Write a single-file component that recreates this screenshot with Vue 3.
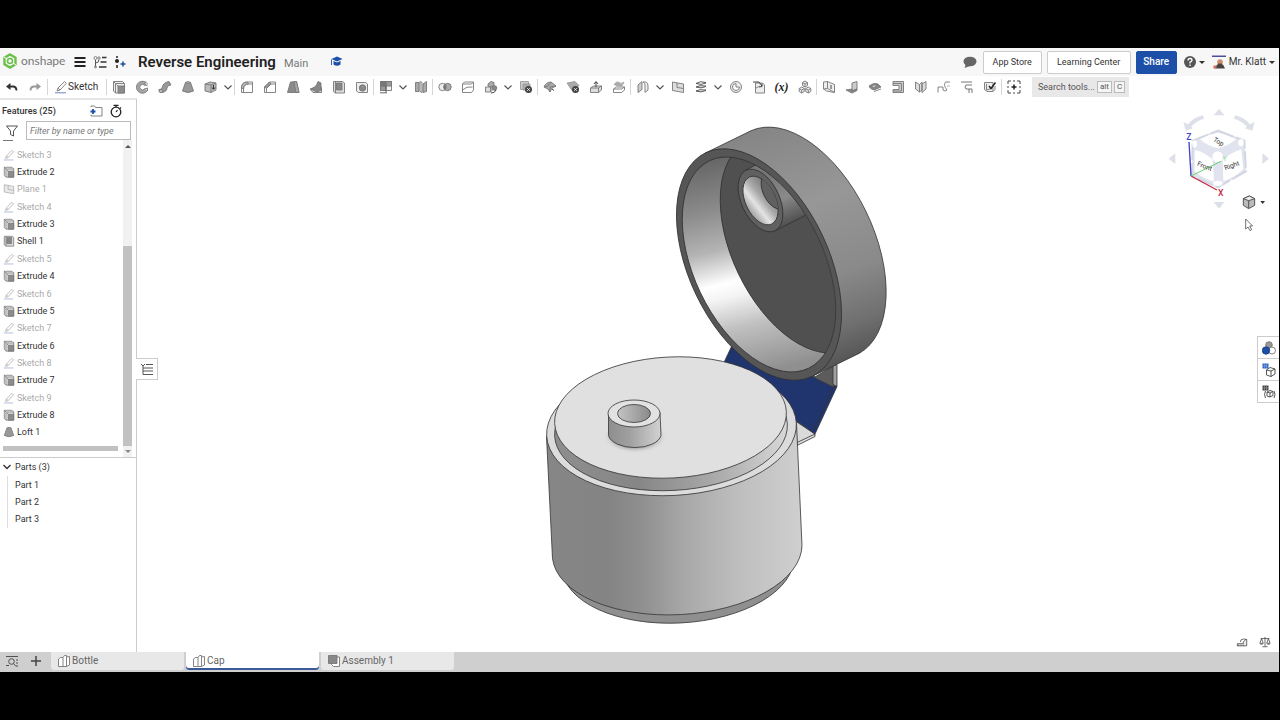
<script setup>
import { h, ref } from 'vue'

const icons = {
  undo: '<path d="M5.500 3v7L1 6.500z" fill="#333" stroke="none"/><path d="M4 6.500h4.500q3 .500 3 4" stroke="#333" stroke-width="1.800"/>',
  redo: '<path d="M8.500 3v7L13 6.500z" fill="#999" stroke="none"/><path d="M10 6.500H5.500q-3 .500-3 4" stroke="#999" stroke-width="1.800"/>',
  pencil: '<path d="M3 11l1-3 6.500-6.500 1.800 1.800L6 10z M4 8l2 2" /><path d="M1 12.800h11" stroke="#5b77b5"/>',
  extrude: '<path d="M1.500 1.500h9l2 2v9.500h-9l-2-2z" fill="#eee"/><path d="M3.500 13V3.500h9M1.500 1.500l2 2"/><path d="M6 6h6.500v7H6z" fill="#8c8c8c"/><path d="M6 6l-1.500-1.500"/>',
  revolve: '<path d="M12.500 4A6 6 0 1 0 12.500 10.500L9.800 8.800A2.800 2.800 0 1 1 9.800 5.500z" fill="#a5a5a5"/><path d="M11 1.500L9.500 4l3 2 M9.500 9l3-1v3" fill="#ddd"/>',
  sweep: '<path d="M1 9.500q3 .500 3.500-2.500Q5 2.500 11 1.500l2 3.500q-4 0-4 3Q8.500 12.500 3 12.500q-2-1-2-3z" fill="#999"/><ellipse cx="3" cy="11" rx="2" ry="1.600" fill="#bbb"/>',
  loft: '<path d="M4.500 2.500h5l3 8.500q-5.500 3-11 0z" fill="#999"/><path d="M4.500 2.500q2.500-2 5 0-2.500 1.500-5 0z" fill="#ddd"/>',
  thicken: '<path d="M1 4l5-2 6 1v7l-5 2.500-6-1.500z" fill="#bbb"/><path d="M1 4l6 1 5-2M7 5v7.500"/><path d="M9.500 5v4M8 7.500l1.500 1.800L11 7.500" stroke="#222"/>',
  fillet: '<path d="M1.500 12.500V8q0-6 6-6h5v10.500z" fill="#fff"/><path d="M3.500 12.500V9q0-5 5-5h4"/><path d="M1.500 8q0-6 6-6l1 2q-5 0-5 5z" fill="#bbb"/>',
  chamfer: '<path d="M1.500 12.500V7l5-5h6v10.500z" fill="#fff"/><path d="M3.500 12.500V8.500L8 4h4.500"/><path d="M1.500 7l5-5L8 4 3.500 8.500z" fill="#999"/>',
  draft: '<path d="M4.500 2l6-.500 2.500 11H1.500z" fill="#8a8a8a"/><path d="M8 2l2.500-.500 2.500 11H10z" fill="#aaa"/>',
  rib: '<path d="M1 9l8-3 3.500 1.500v5L4 12.500z" fill="#ccc"/><path d="M2 9q5-1 7-7.500L12 3v7l-4 2z" fill="#888"/>',
  shell: '<path d="M1.500 1.500h9l2 1.500v10h-9l-2-1.500z" fill="#ddd"/><path d="M4.500 3h5.500v7H4.500z" fill="#888"/><path d="M3.500 1.500V13"/>',
  hole: '<path d="M1.500 2.500h9l2 1.500v8.500h-9l-2-1.500z" fill="#eee"/><circle cx="7.500" cy="8" r="3.200" fill="#888"/><path d="M5 7a2.800 2 0 0 1 5 0" fill="#bbb"/>',
  pattern: '<path d="M1.500 1.500h11v9h-11z" fill="#eee"/><path d="M7 1.500h5.500V6H7zM1.500 6H7v4.500H1.500z" fill="#999"/><path d="M1.500 1.500H7V6H1.500z" fill="#777"/><path d="M7 6v6.500" stroke="#555"/><path d="M1 12.800h7" stroke="#555"/>',
  mirror: '<path d="M1.500 2.500H5v9H1.500zM9 4l3.500-2.500v10L9 12.500z" fill="#aaa"/><path d="M6 1.500l2 1v10l-2-1z" fill="#eee"/>',
  boolean: '<circle cx="4.500" cy="7" r="3.700" fill="#eee"/><circle cx="9.500" cy="7" r="3.700" fill="#aaa"/><path d="M7 4.300a3.700 3.700 0 0 1 0 5.400 3.700 3.700 0 0 1 0-5.400z" fill="#777"/>',
  split: '<path d="M1.500 4l2-2h9v8l-2 2.500h-9z" fill="#fff"/><path d="M1.500 4h9l2-2M1.500 10q4-4 10-3" stroke="#777"/>',
  transform: '<path d="M1.500 7h5v5h-5zM6.500 7l1.500-1.500v5L6.500 12" fill="#ddd"/><path d="M4 4l3-2.500 3 1v3L7 7 4 6z" fill="#aaa"/><circle cx="10.500" cy="8" r="2.300" fill="#888"/><path d="M7 13q4 0 5-3" stroke="#333"/>',
  deletePart: '<path d="M1.500 1.500h8v8h-8z" fill="#ccc" stroke="#999"/><path d="M4 4h7v6H4z" fill="#aaa" stroke="#999"/><circle cx="9.500" cy="9.500" r="3.500" fill="#444" stroke="none"/><path d="M8.200 8.200l2.600 2.600M10.800 8.200L8.200 10.800" stroke="#fff"/>',
  modFillet: '<path d="M1 7q2-5 7-5l5 4-4 2-2 4-2-3z" fill="#aaa"/><path d="M1 7l4-1 3-4M7 12V7l6-1" /><path d="M9 9l2 1.500" stroke="#333"/>',
  deleteFace: '<path d="M1 3l8-1.500 4 4-7 5z" fill="#aaa" stroke="#999"/><circle cx="9.500" cy="9.500" r="3.500" fill="#444" stroke="none"/><path d="M8.200 8.200l2.600 2.600M10.800 8.200L8.200 10.800" stroke="#fff"/>',
  moveFace: '<path d="M1.500 8l3-2h8v4l-3 2.500h-8z" fill="#ddd"/><path d="M1.500 8h8l3-2M9.500 8v4.500"/><path d="M7 7V2M5 4l2-2.500L9 4" stroke="#333"/>',
  replaceFace: '<path d="M1.500 9l3-2h8v3l-3 2.500h-8z" fill="#fff"/><path d="M1.500 9h8l3-2"/><path d="M2 4.500q3-4 5-2t5-.500l-2 4q-4 1-8-1.500z" fill="#aaa" stroke="#aaa"/>',
  surface: '<path d="M2 12.500V5l4-3.500v8z" fill="#ccc"/><path d="M7 2q5-1 5 4v4l-3 2.500V5q0-2-2-3z" fill="#eee"/>',
  plane: '<path d="M1.500 2l11 2v8.500l-11-2z" fill="#ddd"/><path d="M6 3v4.500l6.500 1"/>',
  helix: '<path d="M2 3.500q5 2 10-.500M2 3.500q4-3 10-1M2 7q5 2 10-.500M2 7q3-2 10-1M2 11q5 2 10-.500M2 11q3-2 10-1" stroke="#444"/>',
  clock: '<circle cx="7" cy="7" r="5.500" fill="#eee"/><path d="M7 3.500V7h3.500A3.500 3.500 0 1 1 7 3.500z" fill="#fff"/>',
  derive: '<path d="M3.500 3h7l2 2v8h-9z" fill="#eee"/><path d="M1 2h6l3 4M7 7l3-.500V3.500" stroke="#333"/><path d="M4 8l4-2" stroke="#777"/>',
  parts: '<path d="M7 1l2.500 1.500v3L7 7 4.500 5.500v-3zM3.700 7l2.600 1.500v3l-2.600 1.500-2.500-1.500v-3zM10.300 7l2.500 1.500v3L10.300 13l-2.600-1.500v-3z" fill="#eee" stroke="#777"/><path d="M4.500 2.500L7 4l2.500-1.500M7 4v3M1.200 8.500L3.700 10l2.600-1.500M3.700 10v3M7.700 8.500l2.600 1.500 2.500-1.500M10.300 10v3" stroke="#777"/>',
  sheet: '<path d="M1.500 2l4-.500 7 3v8l-8-1.500-3-2z" fill="#eee"/><path d="M5.500 1.500v7l7 4M1.500 9l4-.500" /><path d="M9 5v4" stroke="#333"/>',
  flange: '<path d="M7 3l5-1.500V9L7 11z" fill="#ccc"/><path d="M1 10l6-1v2l5-2v1.500L7 13z" fill="#888"/>',
  hem: '<path d="M1 6q5-4 9-2l3 3-7 3q-4-1-5-4z" fill="#888"/><path d="M3 6q4-2 6-.500L6 8z" fill="#ccc"/><path d="M6 11.500l7-2.500"/>',
  tab: '<path d="M2 1.500h10.500v11H2v-3h6v-4H2z" fill="#ccc"/><path d="M2 3.500h8.500v7.500H2"/>',
  bend: '<path d="M1.500 2l4 2.500V12l-4-3zM5.500 4.500L8 2v8l-2.500 2M8 4l4-2.500V9L8 12.500z" fill="#ddd"/>',
  relief: '<path d="M1 12.500V7h5v3q2 2 4 0Q6 5 8.500 2H13" /><path d="M10 6h3" stroke="#aaa"/>',
  joint: '<path d="M1 2h11M12 5H6q-2 2 0 4h6M9 9v4M12 9v4" stroke="#666"/>',
  finish: '<path d="M1.500 2.500h8.500v9h-6l-2.500-2z" fill="#eee"/><path d="M3.500 4v6M3.500 10l6-2M10 11.500l2-2V6"/><path d="M6 6l2 2.500 4.500-6" stroke="#222" stroke-width="1.500"/>',
  addTool: '<path d="M1 4V1h3M10 1h3v3M13 10v3h-3M4 13H1v-3M6 1h2M6 13h2M1 6v2M13 6v2" stroke="#333"/><path d="M7 4.500v5M4.500 7h5" stroke="#222" stroke-width="1.500"/>',
  folder: '<path d="M2 3V2h3.500l1 1.500H13V12H2v-1.500"/><path d="M4 5v5M1.500 7.500h5" stroke="#1b4fa8" stroke-width="1.800"/>',
  stopwatch: '<circle cx="7" cy="8" r="4.800" stroke="#222" stroke-width="1.300"/><path d="M7 3V1.500M4.500 1.300h5M11 3.500l1 1M7 8l1.500-2" stroke="#222" stroke-width="1.200"/>',
  funnel: '<path d="M1.500 2h11L8.500 7v5l-3-1.500V7z" stroke="#444"/>',
  menu: '<path d="M1.500 3h11M1.500 7h11M1.500 11h11" stroke="#222" stroke-width="2"/>',
  tree: '<circle cx="2.500" cy="3" r="1.500"/><circle cx="6" cy="3" r="1.200"/><path d="M2.500 5v7M2.500 8q3.500 0 3.500-3.500" stroke="#444"/><circle cx="2.500" cy="12" r="1"/><path d="M9 2.500h4.500M7.500 7h6M6 12h7.500" stroke="#333" stroke-width="1.300"/>',
  versionAdd: '<path d="M4 1v2M4 10v3" stroke="#222" stroke-width="1.500"/><circle cx="4" cy="6" r="2" fill="#222" stroke="none"/><path d="M10 6.500v5M7.500 9h5" stroke="#1b4fa8" stroke-width="1.600"/>',
  hat: '<path d="M7 1.500l5.500 2.500L7 6.500 1.500 4z" fill="#1b4fa8" stroke="none"/><path d="M3.500 6v3.500q3.500 2.500 7 0V6L7 7.500z" fill="#1b4fa8" stroke="none"/><path d="M1.500 4.500v5.500" stroke="#1b4fa8"/>',
  chat: '<ellipse cx="7" cy="6.500" rx="6.500" ry="4.800" fill="#666" stroke="none"/><path d="M3 9l-1.500 4L7 11z" fill="#666" stroke="none"/>',
  search: '<path d="M1 2.500h12M1 11.500h3M11 6h2M11 9h2M11 12h2" stroke="#444"/><circle cx="6.500" cy="7.500" r="2.800" stroke="#444"/><path d="M8.500 9.500l2.500 3" stroke="#444"/>',
  plus: '<path d="M7 2v10M2 7h10" stroke="#444" stroke-width="1.500"/>',
  studio: '<path d="M1.500 5l2-1.500h2.500v9H1.500zM6 3.500L7.500 1.500h2v11H6M9.500 3l3-.500V11l-3 1.500" fill="#fff"/>',
  assembly: '<path d="M4.500 3h8v9.500h-6l-2-2z" fill="#fff"/><path d="M1.500 1.500h8.500v8h-8.500z" fill="#888"/>',
  listTree: '<path d="M1 2l2 2 2-2M3 4v8.500M3 6h3M3 9h3M3 12.500h3" stroke="#444"/><path d="M6 2.500h7M6 6h7M6 9h7M6 12.500h7" stroke="#444"/>',
  spheres: '<circle cx="7" cy="4" r="3.300" fill="#999"/><circle cx="10" cy="9.500" r="3.500" fill="#fff"/><circle cx="4" cy="9.500" r="3.700" fill="#1b4fa8" stroke="#1b3f88"/>',
  config: '<path d="M8 4.500l5 1.500v5L9 13.500 4.500 12V7z" fill="#fff" stroke="#444"/><path d="M4.500 7L9 8l4-2M9 8v5.500" stroke="#444"/><path d="M.500.500h6v5h-6z" fill="#2d62c4" stroke="none"/><path d="M2.500.500v5M4.500.500v5M.500 3h6" stroke="#9db8e8" stroke-width=".500"/>',
  configVar: '<path d="M8 5.500l3 1v4l-3 1.500-3-1V7zM5 7l3 1 3-1.500M8 8v4M3.500 6q-2 3.500 0 7M12 6q2 3.500 0 7" stroke="#444"/><path d="M.500.500h6v5h-6z" fill="#444" stroke="none"/><path d="M2.500.500v5M4.500.500v5M.500 3h6" stroke="#aaa" stroke-width=".500"/>',
  measure: '<path d="M1.500 9h7V7l3-3h1v7.500h-11z" fill="#eee" stroke="#444"/><path d="M5 7q0-3.500 4-3.500l3 .500M3 10v1.500M6 10v1.500M9 10v1.500" stroke="#444"/>',
  scale: '<path d="M2 3h10M7 1v11M4 12.500h6M3 3L1 8.500h4zM11 3L9 8.500h4zM1.500 9.500h3M9.500 9.500h3" stroke="#444"/>',
  chevron: '<path d="M3.500 5.500L7 9l3.500-3.500" stroke="#555" stroke-width="1.200"/>',
  help: '<circle cx="7" cy="7" r="6" fill="#555" stroke="none"/><path d="M5 5.500q0-2 2-2t2 1.800Q9 6.500 7 7.200V8.500M7 9.500v1.500" stroke="#fff" stroke-width="1.300"/>',
  avatar: '<path d="M0 .500h14v1.500H0z" fill="#4b4f9b" stroke="none"/><circle cx="8" cy="7" r="2.800" fill="#c98f70" stroke="none"/><path d="M3 13.500l2-4h6l2 4z" fill="#444" stroke="none"/><path d="M1.500 10.500h3v3h-3z" fill="#d56b60" stroke="none"/><path d="M6 8.500h4v1.800H6z" fill="#5a3d33" stroke="none"/>',
}

const Icon = (props) =>
  h('svg', {
    class: 'icon', viewBox: '0 0 14 14', width: 14, height: 14,
    fill: 'none', stroke: '#777', 'stroke-width': 0.9, innerHTML: icons[props.name],
  })

const toolGroups = [
  ['extrude', 'revolve', 'sweep', 'loft', 'thicken', 'chevron'],
  ['fillet', 'chamfer', 'draft', 'rib', 'shell', 'hole'],
  ['pattern', 'chevron', 'mirror'],
  ['boolean', 'split', 'transform', 'chevron', 'deletePart'],
  ['modFillet', 'deleteFace', 'moveFace', 'replaceFace'],
  ['surface', 'chevron', 'plane', 'helix', 'chevron', 'clock', 'derive', 'variable', 'parts'],
  ['sheet', 'flange', 'hem', 'tab', 'bend', 'relief', 'joint', 'finish'],
  ['addTool'],
]

const features = [
  ['Sketch 3', 'pencil'], ['Extrude 2', 'extrude'], ['Plane 1', 'plane'], ['Sketch 4', 'pencil'],
  ['Extrude 3', 'extrude'], ['Shell 1', 'shell'], ['Sketch 5', 'pencil'], ['Extrude 4', 'extrude'],
  ['Sketch 6', 'pencil'], ['Extrude 5', 'extrude'], ['Sketch 7', 'pencil'], ['Extrude 6', 'extrude'],
  ['Sketch 8', 'pencil'], ['Extrude 7', 'extrude'], ['Sketch 9', 'pencil'], ['Extrude 8', 'extrude'],
  ['Loft 1', 'loft'],
]
const hidden = (icon) => icon === 'pencil' || icon === 'plane'

const tabs = [['Bottle', 'studio'], ['Cap', 'studio'], ['Assembly 1', 'assembly']]
const activeTab = ref('Cap')
const filter = ref('')
</script>

<template>
  <div class="screen">
    <header class="top">
      <a href="#" class="brand">
        <svg width="14" height="16" viewBox="0 0 14 16" fill="none">
          <path d="M7 1.500l5.500 3.200v6.600L7 14.500l-5.500-3.200V4.700z" stroke="#6cc04a" stroke-width="2.400" />
          <circle cx="7" cy="8" r="2.500" stroke="#6cc04a" stroke-width="1.500" />
          <path d="M1 4l3 2M13 12l-3-2" stroke="#f7f7f7" />
        </svg>
        <span>onshape</span>
      </a>
      <button class="plain" aria-label="Menu"><Icon name="menu" /></button>
      <button class="plain" aria-label="Versions"><Icon name="tree" /></button>
      <button class="plain" aria-label="Create version"><Icon name="versionAdd" /></button>
      <h1>Reverse Engineering</h1>
      <span class="branch">Main</span>
      <Icon name="hat" />
      <div class="account">
        <button class="plain chat" aria-label="Comments"><Icon name="chat" /></button>
        <button class="btn">App Store</button>
        <button class="btn wide">Learning Center</button>
        <button class="btn share">Share</button>
        <button class="plain help" aria-label="Help"><Icon name="help" /><i class="caret"></i></button>
        <button class="plain user"><Icon name="avatar" /><span>Mr. Klatt</span><i class="caret"></i></button>
      </div>
    </header>

    <nav class="toolbar">
      <div class="history">
        <button class="plain tool" aria-label="Undo"><Icon name="undo" /></button>
        <button class="plain tool" aria-label="Redo"><Icon name="redo" /></button>
      </div>
      <div class="group">
        <button class="plain sketch"><Icon name="pencil" /><span>Sketch</span></button>
      </div>
      <div v-for="(group, g) in toolGroups" :key="g" class="group">
        <button v-for="(t, i) in group" :key="i" class="plain" :class="t === 'chevron' ? 'more' : 'tool'" :aria-label="t">
          <span v-if="t === 'variable'" class="variable">(x)</span>
          <Icon v-else :name="t" />
        </button>
      </div>
      <button class="tool-search">Search tools... <kbd>alt</kbd><kbd>C</kbd></button>
    </nav>

    <div class="work">
      <aside class="panel">
        <div class="panel-head">
          <h2>Features (25)</h2>
          <button class="plain" aria-label="Add folder"><Icon name="folder" /></button>
          <button class="plain" aria-label="Regeneration times"><Icon name="stopwatch" /></button>
        </div>
        <div class="filter">
          <Icon name="funnel" />
          <input v-model="filter" type="text" placeholder="Filter by name or type" aria-label="Filter by name or type" />
        </div>
        <div class="tree">
          <div class="tree-main">
            <div class="sliver"></div>
            <ul class="features">
              <li v-for="[name, icon] in features" :key="name" :class="{ dim: hidden(icon) }"><Icon :name="icon" /><span>{{ name }}</span></li>
            </ul>
            <div class="hthumb"></div>
          </div>
          <div class="vbar">
            <i class="up"></i>
            <div class="vthumb"></div>
            <i class="down"></i>
          </div>
        </div>
        <div class="parts">
          <div class="parts-head"><svg width="10" height="10" viewBox="0 0 10 10" fill="none"><path d="M1.500 3L5 6.500 8.500 3" stroke="#333" stroke-width="1.400" /></svg><span>Parts (3)</span></div>
          <ul>
            <li>Part 1</li>
            <li>Part 2</li>
            <li>Part 3</li>
          </ul>
        </div>
      </aside>

      <main class="viewport">
        <svg class="model" viewBox="137 99 1142 553" fill="none" stroke="#333" stroke-width=".8">
          <defs>
            <linearGradient id="side" gradientUnits="userSpaceOnUse" x1="546" y1="0" x2="802" y2="0">
              <stop offset="0" stop-color="#868686" /><stop offset=".25" stop-color="#848484" /><stop offset=".38" stop-color="#909090" />
              <stop offset=".55" stop-color="#a9a9a9" /><stop offset=".75" stop-color="#bebebe" /><stop offset="1" stop-color="#cfcfcf" />
            </linearGradient>
            <linearGradient id="lip" gradientUnits="userSpaceOnUse" x1="555" y1="0" x2="787" y2="0">
              <stop offset="0" stop-color="#8e8e8e" /><stop offset=".35" stop-color="#868686" />
              <stop offset=".7" stop-color="#acacac" /><stop offset="1" stop-color="#d8d8d8" />
            </linearGradient>
            <linearGradient id="nub" x1="0" x2="1"><stop offset="0" stop-color="#8e8e8e" /><stop offset=".4" stop-color="#a0a0a0" /><stop offset="1" stop-color="#d2d2d2" /></linearGradient>
            <linearGradient id="bore" x1="0" x2="1"><stop offset="0" stop-color="#c4c4c4" /><stop offset="1" stop-color="#8a8a8a" /></linearGradient>
            <linearGradient id="lid" gradientUnits="userSpaceOnUse" x1="760" y1="126" x2="850" y2="365">
              <stop offset="0" stop-color="#858585" /><stop offset=".35" stop-color="#979797" />
              <stop offset=".65" stop-color="#8a8a8a" /><stop offset=".85" stop-color="#707070" /><stop offset="1" stop-color="#525252" />
            </linearGradient>
            <linearGradient id="wall" gradientUnits="userSpaceOnUse" x1="715" y1="150" x2="770" y2="372">
              <stop offset="0" stop-color="#606060" /><stop offset=".25" stop-color="#8a8a8a" /><stop offset=".43" stop-color="#b4b4b4" />
              <stop offset=".58" stop-color="#fff" /><stop offset=".64" stop-color="#f4f4f4" /><stop offset=".78" stop-color="#c0c0c0" /><stop offset="1" stop-color="#8f8f8f" />
            </linearGradient>
            <linearGradient id="cone" x1=".1" y1="0" x2=".5" y2="1"><stop offset="0" stop-color="#686868" /><stop offset=".5" stop-color="#aaa" /><stop offset=".75" stop-color="#e4e4e4" /><stop offset="1" stop-color="#a8a8a8" /></linearGradient>
            <linearGradient id="tube" gradientUnits="userSpaceOnUse" x1="770" y1="175" x2="790" y2="224"><stop offset="0" stop-color="#777" /><stop offset=".5" stop-color="#8a8a8a" /><stop offset="1" stop-color="#505050" /></linearGradient>
            <radialGradient id="contact"><stop offset=".7" stop-color="#b4b4b4" /><stop offset="1" stop-color="#e0e0e0" stop-opacity="0" /></radialGradient>
            <clipPath id="mouth"><ellipse cx="759" cy="265" rx="115" ry="65" transform="rotate(64.500 759 265)" /></clipPath>
            <clipPath id="nozzle"><ellipse cx="760.500" cy="201" rx="26" ry="15" transform="rotate(64.500 760.500 201)" /></clipPath>
          </defs>

          <path d="M796 422L815 434.500V437L797 446z" fill="#dadada" />
          <path d="M797 443l18-8.500" />
          <path d="M732 346L723 365l74 57 18 12.500L837 387l-22-9.500z" fill="#20346e" />
          <path d="M833 388l-20 43" />
          <path d="M814 378l20-12v22z" fill="#5c5c5c" />
          <path d="M833 366l4-1v22l-4-2z" fill="#a0a0a0" />

          <ellipse cx="678" cy="563" rx="116" ry="60.500" transform="rotate(-3 678 563)" fill="#8f8f8f" />
          <path d="M546.500 437L552.500 559A125 65 -3 0 0 802 546L796.500 424z" fill="url(#side)" />
          <ellipse cx="671.500" cy="430" rx="125" ry="66" transform="rotate(-3 671.500 430)" fill="#dcdcdc" />
          <ellipse cx="671" cy="430.500" rx="116.500" ry="60.500" transform="rotate(-3 671 430.500)" fill="url(#lip)" />
          <ellipse cx="670.500" cy="418" rx="116" ry="60.500" transform="rotate(-3 670.500 418)" fill="#e0e0e0" />

          <ellipse cx="635" cy="437" rx="32" ry="17" fill="url(#contact)" stroke="none" />
          <path d="M608.500 414V436A26.500 14 0 0 0 661 436L660 413z" fill="url(#nub)" />
          <ellipse cx="634" cy="414" rx="26" ry="13.500" fill="#e2e2e2" />
          <ellipse cx="634" cy="414" rx="16.500" ry="9" fill="url(#bore)" />

          <path d="M704.900 153.800L750.900 131.300A123.800 69.800 64.500 0 1 859.500 353.700L813.500 376.200z" fill="url(#lid)" />
          <ellipse cx="759" cy="265" rx="123.800" ry="69.800" transform="rotate(64.500 759 265)" fill="#565656" />
          <g clip-path="url(#mouth)">
            <rect x="670" y="140" width="180" height="240" fill="url(#wall)" stroke="none" />
            <ellipse cx="797" cy="246" rx="115" ry="65" transform="rotate(64.500 797 246)" fill="#505050" />
            <path d="M745.700 170.700L779 153.500 810 213.500 775.300 231.300z" fill="url(#tube)" />
            <ellipse cx="760.500" cy="201" rx="33.500" ry="19" transform="rotate(64.500 760.500 201)" fill="#606060" />
            <ellipse cx="760.500" cy="201" rx="26" ry="15" transform="rotate(64.500 760.500 201)" fill="url(#cone)" />
            <g clip-path="url(#nozzle)"><ellipse cx="775" cy="191" rx="20" ry="12" transform="rotate(64.500 775 191)" fill="#606060" /></g>
          </g>
          <ellipse cx="759" cy="265" rx="115" ry="65" transform="rotate(64.500 759 265)" />
        </svg>

        <button class="plain collapse" aria-label="Toggle list"><Icon name="listTree" /></button>

        <svg class="cube" width="129" height="140" viewBox="0 0 387 420" fill="none">
          <g fill="#dde0e8">
            <path d="M207 26l16 20h-32zM207 326l16-20h-32zM56 176l20-16v32zM357 176l-20-16v32z" />
            <path d="M100 66l7 26 22-7-6-5q20-20 39-23l-3-11q-26 5-45 27zM314 66l-7 26-22-7 6-5q-20-20-39-23l3-11q26 5 45 27z" />
          </g>
          <path d="M204 90L283 120 288 214 204 264 126 228 128 120z" fill="#e1e4ee" />
          <path d="M204 92L283 122 288 214 204 262 126 228 128 122z" stroke="#d3d7e3" stroke-width="6" stroke-dasharray="50 8" />
          <g fill="#fff">
            <path d="M150 118q30-16 54-20 30 6 54 20-20 18-54 27-34-8-54-27z" />
            <path d="M134 150q28 6 54 28l4 66q-34-8-58-30z" />
            <path d="M218 180q28-24 56-32l6 60q-28 26-60 36z" />
            <circle cx="203" cy="170" r="16" /><ellipse cx="204" cy="250" rx="14" ry="8" />
            <ellipse cx="134" cy="132" rx="7" ry="11" /><ellipse cx="273" cy="128" rx="8" ry="11" />
          </g>
          <path d="M123 228L117 126" stroke="#4343c8" stroke-width="4" />
          <path d="M123 228l78 42" stroke="#c22a42" stroke-width="4" />
          <path d="M123 228l90-44" stroke="#63d46c" stroke-width="3" />
          <g class="cube-text">
            <text x="109" y="121" class="axis" fill="#4343c8">Z</text>
            <text x="204" y="289" class="axis" fill="#c22a42">X</text>
            <text x="218" y="184" fill="#8be092">Y</text>
            <text x="140" y="196" fill="#333" transform="rotate(22 140 196)">Front</text>
            <text x="226" y="211" fill="#333" transform="rotate(-20 226 211)">Right</text>
            <text x="188" y="122" fill="#333" transform="rotate(32 188 122)">Top</text>
          </g>
          <g stroke="#555" stroke-width="3">
            <path d="M280 296l18-8 16 8v20l-18 10-16-10z" fill="#bbb" /><path d="M280 296l16 6 18-6-16-8z" fill="#eee" /><path d="M296 302v22" />
          </g>
          <path d="M331 303h14l-7 9z" fill="#333" />
          <path d="M287 357v30l7-6 6 11 5-3-6-11h9z" fill="#fff" stroke="#555" stroke-width="2.500" />
        </svg>

        <div class="side-tabs">
          <button class="plain" aria-label="Appearances"><Icon name="spheres" /></button>
          <button class="plain" aria-label="Configurations"><Icon name="config" /></button>
          <button class="plain" aria-label="Variables"><Icon name="configVar" /></button>
        </div>
        <div class="meters">
          <button class="plain" aria-label="Measure"><Icon name="measure" /></button>
          <button class="plain" aria-label="Mass properties"><Icon name="scale" /></button>
        </div>
      </main>
    </div>

    <footer class="tabs">
      <button class="plain tab-tool" aria-label="Tab manager"><Icon name="search" /></button>
      <button class="plain tab-tool" aria-label="Add tab"><Icon name="plus" /></button>
      <button v-for="[name, icon] in tabs" :key="name" class="tab" :class="{ active: name === activeTab }" @click="activeTab = name"><Icon :name="icon" /><span>{{ name }}</span></button>
    </footer>
  </div>
</template>

<style>
body { background: #000; }
.icon { display: block; flex: none; }
</style>

<style scoped>
* { box-sizing: border-box; }
.screen { display: flex; flex-direction: column; height: 100vh; padding: 48px 1px 48px 0; background: #000; color: #333; font-family: Roboto, "Liberation Sans", sans-serif; font-size: 10px; line-height: 12px; }
button, input { font: inherit; color: inherit; }
h1, h2, ul { margin: 0; padding: 0; font-size: inherit; list-style: none; }
.plain { display: flex; align-items: center; padding: 0; border: 0; background: none; }
.caret { border: 3px solid transparent; border-top-color: #333; border-bottom: 0; }

.top { display: flex; flex: none; align-items: center; height: 28px; padding: 0 4px 0 3px; background: #f7f7f7; }
.brand { display: flex; align-items: center; gap: 4px; width: 70px; padding-bottom: 2px; color: #777; font: 12px/16px Lato, sans-serif; text-decoration: none; }
.top > .plain { width: 20px; }
h1 { margin-left: 5px; color: #222; font-size: 15px; font-weight: 600; line-height: 18px; white-space: nowrap; }
.branch { margin: 3px 22px 0 8px; color: #777; font-size: 11px; }
.account { display: flex; align-items: center; margin-left: auto; }
.chat { margin-right: 6px; }
.btn { width: 59px; height: 23px; margin-right: 5px; padding: 0; border: 1px solid #ccc; border-radius: 2px; background: #fff; font-size: 9px; white-space: nowrap; }
.wide { width: 84px; }
.share { width: 41px; border-color: #1b4fa8; background: #1b4fa8; color: #fff; font-size: 10px; font-weight: 500; }
.help { gap: 2px; margin: 0 7px 0 1px; }
.user { gap: 3px; font-size: 10px; white-space: nowrap; }

.toolbar { display: flex; flex: none; align-items: center; height: 22px; background: #fff; }
.history { display: flex; width: 47px; }
.group { display: flex; align-items: center; height: 16px; border-left: 1px solid #d5d5d5; }
.tool { justify-content: center; width: 23px; }
.more { justify-content: center; width: 12px; }
.sketch { gap: 0; width: 58px; padding-left: 6px; }
.variable { color: #222; font: italic bold 12px/14px "Liberation Serif", serif; }
.tool-search { display: flex; align-items: center; gap: 2px; width: 97px; height: 20px; margin-left: 7px; padding: 0 6px; border: 0; background: #e8e8e8; color: #555; font-size: 9px; white-space: nowrap; }
kbd { padding: 0 2px; border: 1px solid #bbb; background: #f5f5f5; font: 8px/10px Roboto, sans-serif; }

.work { display: flex; flex: 1; min-height: 0; }
.panel { display: flex; flex: none; flex-direction: column; width: 137px; border-top: 2px solid #e6e6e6; border-right: 1px solid #ccc; background: #fff; font-size: 9px; }
.panel-head { display: flex; align-items: center; gap: 6px; height: 21px; padding: 0 13px 0 2px; }
h2 { flex: 1; font-weight: 500; }
.filter { display: flex; align-items: center; gap: 7px; padding: 0 5px 0 5px; }
.filter input { flex: 1; min-width: 0; height: 19px; padding: 0 3px; border: 1px solid #bbb; background: #fff; }
.filter input::placeholder { color: #777; font-style: italic; opacity: 1; }
.tree { display: flex; height: 318px; border-bottom: 1px solid #ccc; }
.tree-main { flex: 1; padding: 0 5px 0 3px; }
.sliver { width: 10px; height: 1px; background: #777; }
.features { display: flex; flex-direction: column; height: 295px; margin: 5px 0; }
.features li, .parts li { display: flex; flex: 1; align-items: center; }
.features .icon { width: 12px; height: 12px; margin-right: 2px; }
.dim { color: #aaa; }
.dim .icon { opacity: .6; }
.hthumb { height: 5px; background: #c1c1c1; }
.vbar { display: flex; flex-direction: column; align-items: center; width: 9px; margin-right: 4px; padding: 5px 0 4px; background: #f1f1f1; }
.vthumb { width: 9px; height: 200px; margin: auto 0 4px; background: #c1c1c1; }
.up { border: 3px solid transparent; border-bottom-color: #555; border-top: 0; }
.down { border: 3px solid transparent; border-top-color: #888; border-bottom: 0; }
.parts { height: 70px; }
.parts-head { display: flex; align-items: center; gap: 3px; height: 18px; padding-left: 2px; }
.parts ul { display: flex; flex-direction: column; height: 52px; margin-left: 7px; padding-left: 7px; border-left: 1px solid #ddd; }

.viewport { position: relative; flex: 1; min-width: 0; background: #fff; }
.model { display: block; width: 100%; height: 100%; }
.collapse { position: absolute; top: 260px; left: -1px; justify-content: center; width: 22px; height: 22px; border: 1px solid #ccc; border-left: 0; background: #fff; }
.cube { position: absolute; top: 2px; right: 0; }
.cube-text { font-family: Roboto, sans-serif; font-size: 20px; }
.axis { font-size: 26px; font-weight: 500; }
.side-tabs { position: absolute; top: 238px; right: 0; width: 22px; border: 1px solid #ccc; border-right: 0; background: #fff; }
.side-tabs button { justify-content: center; width: 21px; height: 21px; }
.side-tabs button + button { height: 22px; border-top: 1px solid #ccc; }
.meters { position: absolute; right: 8px; bottom: 4px; display: flex; gap: 11px; }
.meters .icon { width: 12px; height: 12px; }

.tabs { display: flex; flex: none; height: 20px; background: #cfcfcf; }
.tab-tool { justify-content: center; width: 24px; height: 18px; }
.tab { display: flex; align-items: center; gap: 1px; width: 133px; height: 18px; margin-right: 2px; padding: 0 6px; border: 0; border-radius: 0 0 3px 3px; background: #e8e8e8; color: #666; }
.tab-tool + .tab { margin-left: 3px; }
.active { background: #fff; box-shadow: inset 0 -2px #3d5a98; }
</style>
